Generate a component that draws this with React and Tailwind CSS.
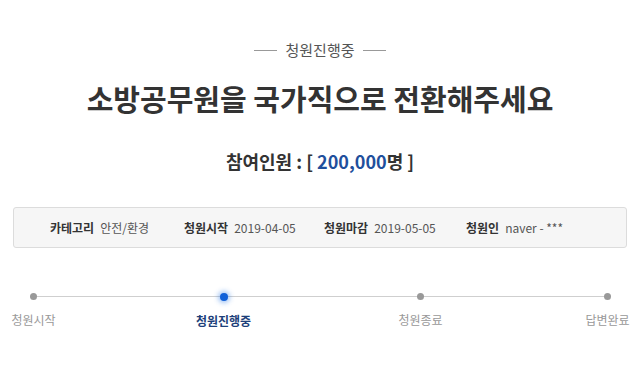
export default function App() {
  const font = { fontFamily: '"Noto Sans CJK KR", "Noto Sans", sans-serif' };
  const info = [
    { k: "카테고리", v: "안전/환경", w: "w-[134px]" },
    { k: "청원시작", v: "2019-04-05", w: "w-[140px]" },
    { k: "청원마감", v: "2019-05-05", w: "w-[142px]" },
    { k: "청원인", v: "naver - ***", w: "w-[150px]" },
  ];
  const steps = [
    { t: "청원시작", active: false, ml: "ml-0" },
    { t: "청원진행중", active: true, ml: "ml-[183px]" },
    { t: "청원종료", active: false, ml: "ml-[190px]" },
    { t: "답변완료", active: false, ml: "ml-[180px]" },
  ];
  return (
    <div className="w-[640px] h-[378px] bg-white flex flex-col items-center pt-[40px] overflow-hidden" style={font}>
      <div className="flex items-center gap-[8px] h-[20px]">
        <span className="w-[23px] h-px bg-[#999]"></span>
        <span className="text-[15px] leading-[20px] text-[#555]">청원진행중</span>
        <span className="w-[23px] h-px bg-[#999]"></span>
      </div>
      <h1 className="mt-[20px] text-[29px] leading-[36px] font-bold text-[#333]">
        소방공무원을 국가직으로 전환해주세요
      </h1>
      <div className="mt-[33px] text-[18px] leading-[24px] font-bold text-[#333]">
        참여인원 : [ <span className="text-[#1f4f9c]">200,000</span>명 ]
      </div>
      <div className="mt-[34px] w-[614px] h-[41px] bg-[#f6f6f6] border border-[#dcdcdc] rounded-[3px] flex items-center pl-[36px]">
        {info.map((i) => (
          <div key={i.k} className={`${i.w} flex items-center gap-[6px] text-[12px] leading-[16px]`}>
            <span className="font-bold text-[#333]">{i.k}</span>
            <span className="text-[#555]">{i.v}</span>
          </div>
        ))}
      </div>
      <div className="relative mt-[45px] w-[640px] pl-[30px]">
        <div className="absolute left-[33px] right-[33px] top-[3px] h-px bg-[#cfcfcf]"></div>
        <div className="relative flex">
          {steps.map((s) => (
            <div key={s.t} className={`${s.ml} w-[7px] flex flex-col items-center`}>
              {s.active ? (
                <span className="w-[8px] h-[8px] -mt-[0.5px] rounded-full bg-[#1060d8] shadow-[0_0_5px_2px_rgba(40,120,230,0.45)]"></span>
              ) : (
                <span className="w-[7px] h-[7px] rounded-full bg-[#999]"></span>
              )}
              <span
                className={`mt-[11px] whitespace-nowrap text-[12px] leading-[18px] ${
                  s.active ? "font-bold text-[#1d3f7a]" : "text-[#999]"
                }`}
              >
                {s.t}
              </span>
            </div>
          ))}
        </div>
      </div>
    </div>
  );
}
